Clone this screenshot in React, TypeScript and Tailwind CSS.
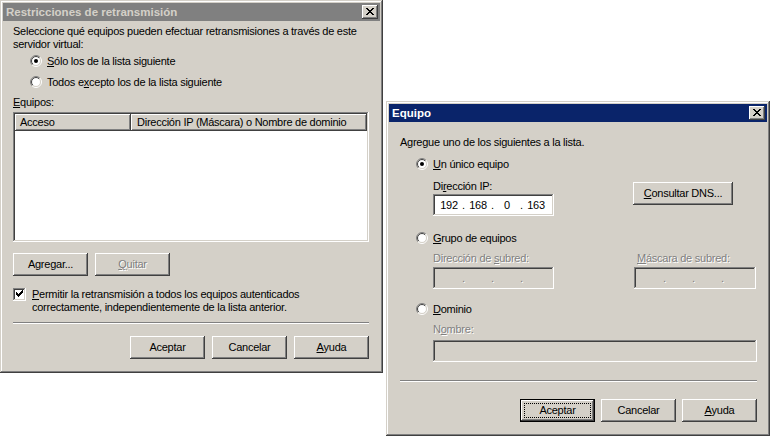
import React from "react";

const raised =
  "shadow-[inset_-1px_-1px_#404040,inset_1px_1px_#ffffff,inset_-2px_-2px_#808080,inset_2px_2px_#d4d0c8]";
const sunken =
  "shadow-[inset_-1px_-1px_#ffffff,inset_1px_1px_#808080,inset_-2px_-2px_#d4d0c8,inset_2px_2px_#404040]";
const winFrame =
  "shadow-[inset_-1px_-1px_#404040,inset_1px_1px_#d4d0c8,inset_-2px_-2px_#808080,inset_2px_2px_#ffffff]";
const disabledText = "text-[#808080] [text-shadow:1px_1px_0_#ffffff]";

function CloseBtn() {
  return (
    <div className={`w-[16px] h-[14px] bg-[#d4d0c8] ${raised} flex items-center justify-center`}>
      <svg width="16" height="14" viewBox="0 0 16 14">
        {[0, 1, 2, 3, 4, 5, 6].map((i) => (
          <React.Fragment key={i}>
            <rect x={4 + i} y={3 + i} width="2" height="1" fill="#000" />
            <rect x={10 - i} y={3 + i} width="2" height="1" fill="#000" />
          </React.Fragment>
        ))}
      </svg>
    </div>
  );
}

function TitleBar({ title, active }: { title: string; active: boolean }) {
  return (
    <div
      className={`h-[18px] mx-[3px] mt-[3px] flex items-center justify-between pl-[3px] pr-[2px] ${
        active ? "bg-[#0a246a] text-white" : "bg-[#808080] text-[#d4d0c8]"
      }`}
    >
      <span className="font-bold text-[11.5px] tracking-normal">{title}</span>
      <CloseBtn />
    </div>
  );
}

function RadioIcon({ checked }: { checked?: boolean }) {
  return (
    <svg width="12" height="12" viewBox="0 0 12 12" className="shrink-0">
      <defs>
        <linearGradient id="rg1" x1="0" y1="0" x2="1" y2="1">
          <stop offset="0.5" stopColor="#808080" />
          <stop offset="0.5" stopColor="#ffffff" />
        </linearGradient>
        <linearGradient id="rg2" x1="0" y1="0" x2="1" y2="1">
          <stop offset="0.5" stopColor="#404040" />
          <stop offset="0.5" stopColor="#d4d0c8" />
        </linearGradient>
      </defs>
      <circle cx="6" cy="6" r="5.5" fill="none" stroke="url(#rg1)" strokeWidth="1" />
      <circle cx="6" cy="6" r="4.5" fill="#ffffff" stroke="url(#rg2)" strokeWidth="1" />
      {checked && <circle cx="6" cy="6" r="2" fill="#000" />}
    </svg>
  );
}

function Radio({
  checked,
  children,
  className,
}: {
  checked?: boolean;
  children: React.ReactNode;
  className: string;
}) {
  return (
    <div className={`flex items-center h-[14px] gap-[5px] ${className}`}>
      <RadioIcon checked={checked} />
      <span>{children}</span>
    </div>
  );
}

function Btn({
  children,
  w,
  disabled,
  def,
}: {
  children: React.ReactNode;
  w: string;
  disabled?: boolean;
  def?: boolean;
}) {
  if (def) {
    return (
      <div className={`${w} h-[23px] border border-black bg-[#d4d0c8] relative`}>
        <div className="w-full h-full shadow-[inset_-1px_-1px_#404040,inset_1px_1px_#ffffff,inset_-2px_-2px_#808080] flex items-center justify-center">
          {children}
        </div>
        <div className="absolute inset-[3px] border border-dotted border-black" />
      </div>
    );
  }
  return (
    <div
      className={`${w} h-[23px] bg-[#d4d0c8] ${raised} flex items-center justify-center ${
        disabled ? disabledText : ""
      }`}
    >
      {children}
    </div>
  );
}

function Separator() {
  return <div className="h-[2px] border-t border-t-[#808080] border-b border-b-white" />;
}

function IpField({
  values,
  disabled,
  w,
}: {
  values: string[];
  disabled?: boolean;
  w: string;
}) {
  return (
    <div
      className={`h-[22px] ${w} ${sunken} ${
        disabled ? "bg-[#d4d0c8] " + disabledText : "bg-white"
      } flex items-center pl-[4px]`}
    >
      {values.map((v, i) => (
        <React.Fragment key={i}>
          {i > 0 && <span className="w-[5px] text-center">.</span>}
          <span className="w-[24px] text-center">{v}</span>
        </React.Fragment>
      ))}
    </div>
  );
}

function CheckBox() {
  const ys = [5, 6, 7, 6, 5, 4, 3];
  return (
    <div className={`w-[13px] h-[13px] bg-white ${sunken} shrink-0`}>
      <svg width="13" height="13" viewBox="0 0 13 13">
        {ys.map((y, i) => (
          <rect key={i} x={3 + i} y={y - 1} width="1" height="3" fill="#000" />
        ))}
      </svg>
    </div>
  );
}

export default function App() {
  const font =
    "font-['Liberation_Sans',Arial,sans-serif] text-[11px] leading-[13px] tracking-[-0.25px] text-black";
  return (
    <div className={`w-[770px] h-[436px] bg-white flex ${font}`}>
      {/* Dialog 1 */}
      <div className={`w-[383px] h-[373px] bg-[#d4d0c8] ${winFrame} flex flex-col shrink-0`}>
        <TitleBar title="Restricciones de retransmisión" active={false} />
        <div className="pl-[13px] pr-[14px] flex flex-col">
          <div className="mt-[4px] whitespace-nowrap">
            Seleccione qué equipos pueden efectuar retransmisiones a través de este
            <br />
            servidor virtual:
          </div>
          <Radio checked className="mt-[3px] ml-[17px]">
            <u>S</u>ólo los de la lista siguiente
          </Radio>
          <Radio className="mt-[7px] ml-[17px]">
            Todos e<u>x</u>cepto los de la lista siguiente
          </Radio>
          <div className="mt-[7px]">
            <u>E</u>quipos:
          </div>
          <div className={`mt-[3px] h-[130px] bg-white p-[2px] ${sunken}`}>
            <div className="flex h-[17px]">
              <div className={`w-[116px] bg-[#d4d0c8] ${raised} pl-[5px] flex items-center`}>
                Acceso
              </div>
              <div className={`flex-1 bg-[#d4d0c8] ${raised} pl-[6px] flex items-center`}>
                Dirección IP (Máscara) o Nombre de dominio
              </div>
            </div>
          </div>
          <div className="mt-[11px] flex gap-[7px]">
            <Btn w="w-[75px]">
              A<u>g</u>regar...
            </Btn>
            <Btn w="w-[75px]" disabled>
              <u>Q</u>uitar
            </Btn>
          </div>
          <div className="mt-[12px] flex items-start gap-[6px]">
            <CheckBox />
            <div className="whitespace-nowrap">
              <u>P</u>ermitir la retransmisión a todos los equipos autenticados
              <br />
              correctamente, independientemente de la lista anterior.
            </div>
          </div>
          <div className="mt-[8px]">
            <Separator />
          </div>
          <div className="mt-[12px] flex justify-end gap-[7px]">
            <Btn w="w-[75px]">Aceptar</Btn>
            <Btn w="w-[75px]">Cancelar</Btn>
            <Btn w="w-[75px]">
              <u>A</u>yuda
            </Btn>
          </div>
        </div>
      </div>

      {/* Dialog 2 */}
      <div
        className={`ml-[3px] mt-[101px] w-[384px] h-[335px] bg-[#d4d0c8] ${winFrame} flex flex-col shrink-0`}
      >
        <TitleBar title="Equipo" active />
        <div className="pl-[14px] pr-[13px] flex flex-col">
          <div className="mt-[14px]">Agregue uno de los siguientes a la lista.</div>
          <Radio checked className="mt-[8px] ml-[16px]">
            <u>U</u>n único equipo
          </Radio>
          <div className="flex ml-[33px]">
            <div className="flex flex-col">
              <div className="mt-[9px]">
                Di<u>r</u>ección IP:
              </div>
              <div className="mt-[1px]">
                <IpField values={["192", "168", "0", "163"]} w="w-[121px]" />
              </div>
            </div>
            <div className="ml-[79px] mt-[11px]">
              <Btn w="w-[100px]">
                <u>C</u>onsultar DNS...
              </Btn>
            </div>
          </div>
          <Radio className="mt-[15px] ml-[16px]">
            <u>G</u>rupo de equipos
          </Radio>
          <div className="flex ml-[33px] mt-[7px]">
            <div className="flex flex-col">
              <div className={disabledText}>
                Dirección de <u>s</u>ubred:
              </div>
              <div className="mt-[2px]">
                <IpField values={["", "", "", ""]} disabled w="w-[121px]" />
              </div>
            </div>
            <div className="flex flex-col ml-[80px]">
              <div className={`pl-[3px] ${disabledText}`}>
                <u>M</u>áscara de subred:
              </div>
              <div className="mt-[2px]">
                <IpField values={["", "", "", ""]} disabled w="w-[122px]" />
              </div>
            </div>
          </div>
          <Radio className="mt-[13px] ml-[16px]">
            <u>D</u>ominio
          </Radio>
          <div className={`mt-[7px] ml-[33px] ${disabledText}`}>
            N<u>o</u>mbre:
          </div>
          <div className={`mt-[4px] ml-[33px] h-[22px] bg-[#d4d0c8] ${sunken}`} />
          <div className="mt-[18px]">
            <Separator />
          </div>
          <div className="mt-[17px] flex justify-end gap-[6px]">
            <Btn w="w-[75px]" def>
              Aceptar
            </Btn>
            <Btn w="w-[75px]">Cancelar</Btn>
            <Btn w="w-[75px]">
              <u>A</u>yuda
            </Btn>
          </div>
        </div>
      </div>
    </div>
  );
}
